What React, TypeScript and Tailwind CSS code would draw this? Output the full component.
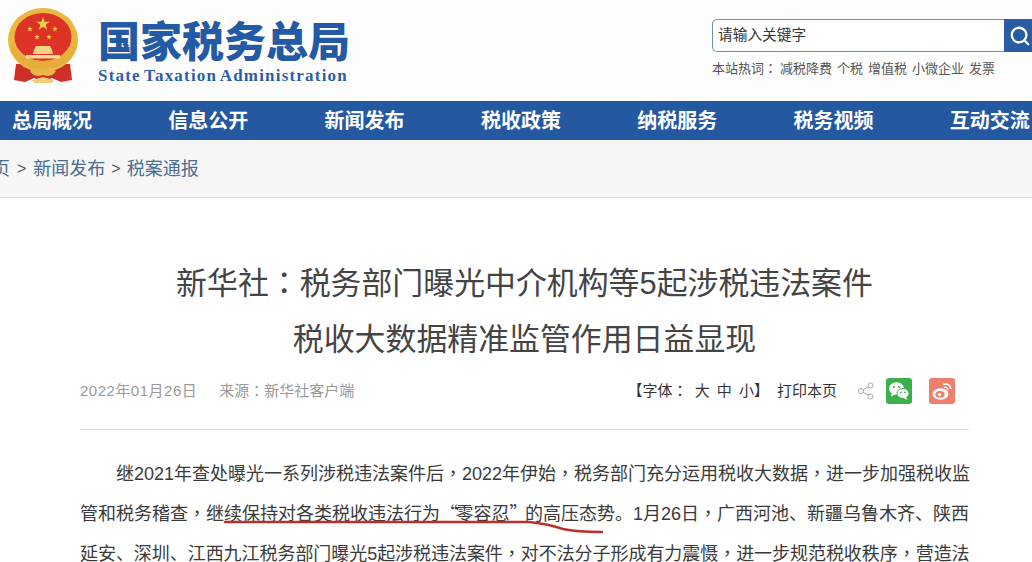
import { Search } from "lucide-react";

const cjk = "font-['Liberation_Sans','Noto_Sans_CJK_SC',sans-serif]";

const navItems = ["总局概况", "信息公开", "新闻发布", "税收政策", "纳税服务", "税务视频", "互动交流"];
const hotWords = ["减税降费", "个税", "增值税", "小微企业", "发票"];

// centred comma / colon as in the reference
const P = ({ c }: { c: string }) => (
  <span className="font-['Noto_Sans_CJK_TC',sans-serif] leading-none">{c}</span>
);

const Quote = ({ c }: { c: string }) => (
  <span className="font-['Noto_Sans_CJK_SC',sans-serif] leading-none tracking-[-2.5px]">{c}</span>
);

const starPath = "M0 -1 L.235 -.324 L.951 -.309 L.38 .124 L.588 .809 L0 .4 L-.588 .809 L-.38 .124 L-.951 -.309 L-.235 -.324 Z";

const Emblem = () => (
  <svg width="74" height="78" viewBox="0 0 74 78" className="shrink-0">
    <path d="M10 56 L8 72 L19 74 L28 70 L37 74 L46 70 L55 74 L66 72 L64 56 Z" fill="#cf2f28" />
    <ellipse cx="37" cy="32" rx="35" ry="32" fill="#eab841" />
    <ellipse cx="37" cy="29" rx="28.5" ry="24" fill="#dd3226" />
    <path d="M4 40 Q12 60 37 62 Q62 60 70 40 L66 38 Q60 52 37 53 Q14 52 8 38 Z" fill="#e6ad3b" />
    <path d="M24 63 Q30 58 37 62 Q44 58 50 63 Q46 70 37 67 Q28 70 24 63 Z" fill="#e9b64a" />
    <path d="M26 72 L37 69 L48 72 L46 75 L28 75 Z" fill="#f0cd78" />
    <g fill="#f5cb4c">
      <path d={starPath} transform="translate(37 16) scale(7)" />
      <path d={starPath} transform="translate(24 21) scale(3)" />
      <path d={starPath} transform="translate(49 21) scale(3)" />
      <path d={starPath} transform="translate(31 29) scale(3)" />
      <path d={starPath} transform="translate(43 29) scale(3)" />
    </g>
    <path d="M30 38 L44 38 L46 42 L47 46 L27 46 L28 42 Z" fill="#f3d385" />
    <rect x="20" y="47" width="34" height="3.5" fill="#f6dc95" />
  </svg>
);

const ShareIcon = () => (
  <svg width="16" height="18" viewBox="0 0 16 18" fill="none" stroke="#a9a9a9" strokeWidth="1">
    <circle cx="12.5" cy="3.5" r="2.5" />
    <circle cx="3" cy="9" r="2.5" />
    <circle cx="12.5" cy="14.5" r="2.5" />
    <path d="M5.2 7.8 L10.3 4.8 M5.2 10.2 L10.3 13.2" />
  </svg>
);

const WechatIcon = () => (
  <svg width="26" height="26" viewBox="0 0 26 26" className="rounded-[3px]">
    <rect width="26" height="26" fill="#3cb04a" />
    <ellipse cx="10.5" cy="10.5" rx="7.5" ry="6.2" fill="#fff" />
    <path d="M6 14 L5 18.5 L10 16 Z" fill="#fff" />
    <ellipse cx="17" cy="15.5" rx="6" ry="5" fill="#fff" stroke="#3cb04a" />
    <path d="M20 19 L21.5 22 L17.5 20 Z" fill="#fff" />
    <circle cx="8" cy="9" r="1.1" fill="#3cb04a" />
    <circle cx="13" cy="9" r="1.1" fill="#3cb04a" />
    <circle cx="15" cy="14.5" r=".9" fill="#3cb04a" />
    <circle cx="19" cy="14.5" r=".9" fill="#3cb04a" />
  </svg>
);

const WeiboIcon = () => (
  <svg width="26" height="26" viewBox="0 0 26 26" className="rounded-[3px]">
    <rect width="26" height="26" fill="#ee7f6b" />
    <ellipse cx="11.5" cy="16" rx="8" ry="5.8" fill="#fff" />
    <ellipse cx="11" cy="16.4" rx="4.6" ry="3.3" fill="#ee7f6b" />
    <circle cx="10.5" cy="16.6" r="1.6" fill="#fff" />
    <path d="M14 6.5 Q21 4.5 22 11" fill="none" stroke="#fff" strokeWidth="1.6" />
    <path d="M15 9.5 Q18.5 8.5 19 12" fill="none" stroke="#fff" strokeWidth="1.4" />
  </svg>
);

export default function App() {
  return (
    <div className={`${cjk} w-[1032px] h-[562px] overflow-hidden bg-white`}>
      <header className="flex h-[101px] bg-[#fdfdfd]">
        <div className="flex pl-[6px] pt-[8px]">
          <Emblem />
          <div className="ml-[18px] pt-[12px]">
            <h1 className="text-[42px] leading-[46px] font-black whitespace-nowrap text-[#2459a6]">国家税务总局</h1>
            <p className="font-['Liberation_Serif',serif] text-[17px] leading-[20px] font-bold tracking-[1.2px] [word-spacing:-2px] whitespace-nowrap text-[#2d5ea6]">
              State Taxation Administration
            </p>
          </div>
        </div>
        <div className="ml-auto w-[320px] pt-[19px]">
          <div className="flex h-[33px]">
            <div className="flex-1 flex items-center pl-[5px] border border-[#6a93ad] border-r-0 rounded-l-[5px] bg-white text-[14.7px] text-[#333]">
              请输入关键字
            </div>
            <div className="w-[28px] flex items-center pl-[5px] bg-[#2a5ca5] overflow-hidden">
              <Search size={22} strokeWidth={2.5} className="text-white shrink-0" />
            </div>
          </div>
          <div className="flex mt-[8px] text-[13px] leading-[18px] text-[#555] whitespace-nowrap">
            <span className="mr-[3px]">本站热词<P c="：" /></span>
            {hotWords.map((w) => (
              <span key={w} className="mr-[5px]">{w}</span>
            ))}
          </div>
        </div>
      </header>

      <nav className="flex h-[39px] items-center pl-[12px] bg-[#2459a1] whitespace-nowrap">
        {navItems.map((item) => (
          <a key={item} className="shrink-0 w-[156.3px] text-[20px] font-bold text-white">{item}</a>
        ))}
      </nav>

      <div className="flex items-center h-[58px] pt-[1px] -ml-[8px] bg-[#f6f6f6] border-b border-[#e4e4e4] text-[18px] text-[#4a6d91] whitespace-nowrap">
        <span>页</span>
        <span className="mx-[7px] text-[#555] text-[16px]">&gt;</span>
        <span>新闻发布</span>
        <span className="mx-[6px] text-[#555] text-[16px]">&gt;</span>
        <span>税案通报</span>
      </div>

      <main className="pl-[80px] pt-[58px]">
        <h2 className="text-center w-[889px] text-[30.9px] leading-[56px] text-[#444]">
          新华社<P c="：" />税务部门曝光中介机构等5起涉税违法案件
          <br />
          税收大数据精准监管作用日益显现
        </h2>

        <div className="flex items-center w-[889px] h-[28px] mt-[9px] text-[15px] text-[#999] whitespace-nowrap">
          <span className="tracking-[0.5px]">2022年01月26日</span>
          <span className="ml-[22px]">来源<P c="：" />新华社客户端</span>
          <div className="ml-auto flex items-center text-[#333]">
            <span className="[word-spacing:3px]">【字体<P c="：" /> 大 中 小】</span>
            <span className="ml-[8px]">打印本页</span>
            <span className="ml-[21px] flex"><ShareIcon /></span>
            <span className="ml-[12px] flex"><WechatIcon /></span>
            <span className="ml-[17px] mr-[14px] flex"><WeiboIcon /></span>
          </div>
        </div>

        <div className="relative w-[889px] mt-[24px] pt-[24px] border-t border-[#dedede] text-[18px] leading-[40px] text-[#3a3a3a] whitespace-nowrap">
          <p className="indent-[36px] [text-align-last:justify]">
            继2021年查处曝光一系列涉税违法案件后<P c="，" />2022年伊始<P c="，" />税务部门充分运用税收大数据<P c="，" />进一步加强税收监
          </p>
          <p className="[text-align-last:justify]">
            管和税务稽查<P c="，" />继续保持对各类税收违法行为<Quote c="“" />零容忍<Quote c="”" />的高压态势。1月26日<P c="，" />广西河池、新疆乌鲁木齐、陕西
          </p>
          <p className="tracking-[-0.05px] [text-align-last:justify]">
            延安、深圳、江西九江税务部门曝光5起涉税违法案件<P c="，" />对不法分子形成有力震慑<P c="，" />进一步规范税收秩序<P c="，" />营造法
          </p>
          <svg width="390" height="18" viewBox="0 0 390 18" fill="none" className="absolute left-[144px] top-[89px]">
            <path d="M1 3 L305 3 Q325 5 339 10 Q352 13 378 13" stroke="#b83028" strokeWidth="2.4" strokeLinecap="round" />
          </svg>
        </div>
      </main>
    </div>
  );
}
